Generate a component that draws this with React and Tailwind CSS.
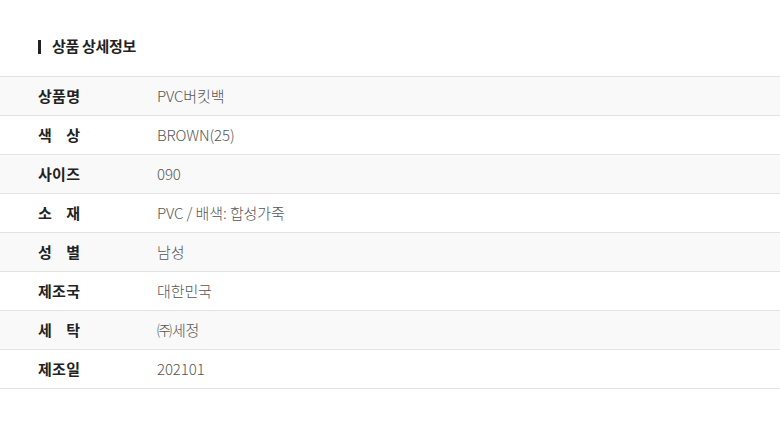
const ROWS = [
  ['상품명', 'PVC버킷백'],
  ['색상', 'BROWN(25)'],
  ['사이즈', '090'],
  ['소재', 'PVC / 배색: 합성가죽'],
  ['성별', '남성'],
  ['제조국', '대한민국'],
  ['세탁', '㈜세정'],
  ['제조일', '202101'],
]

function Label({ text }) {
  return (
    <div className="w-[42px] flex justify-between">
      {text.split('').map((c, i) => (
        <span key={i}>{c}</span>
      ))}
    </div>
  )
}

export default function App() {
  return (
    <div className="w-[780px] h-[427px] bg-white font-['Noto_Sans_CJK_KR','Noto_Sans',sans-serif]">
      <div className="h-[76px] flex items-center pl-[38px] pt-[17px]">
        <span className="w-[3px] h-[14px] bg-[#222] mr-[11px]" />
        <h3 className="text-[15px] font-bold text-[#222] tracking-[-0.3px]">상품 상세정보</h3>
      </div>
      <div className="border-t border-[#e3e3e3]">
        {ROWS.map(([k, v], i) => (
          <div
            key={k}
            className={`h-[39px] flex items-center border-b border-[#e3e3e3] ${i % 2 === 0 ? 'bg-[#f9f9f9]' : 'bg-white'}`}
          >
            <div className="pl-[38px] w-[157px] text-[15px] font-bold text-[#222]">
              <Label text={k} />
            </div>
            <div className="text-[15px] font-light text-[#555] tracking-[-0.1px]">{v}</div>
          </div>
        ))}
      </div>
    </div>
  )
}
